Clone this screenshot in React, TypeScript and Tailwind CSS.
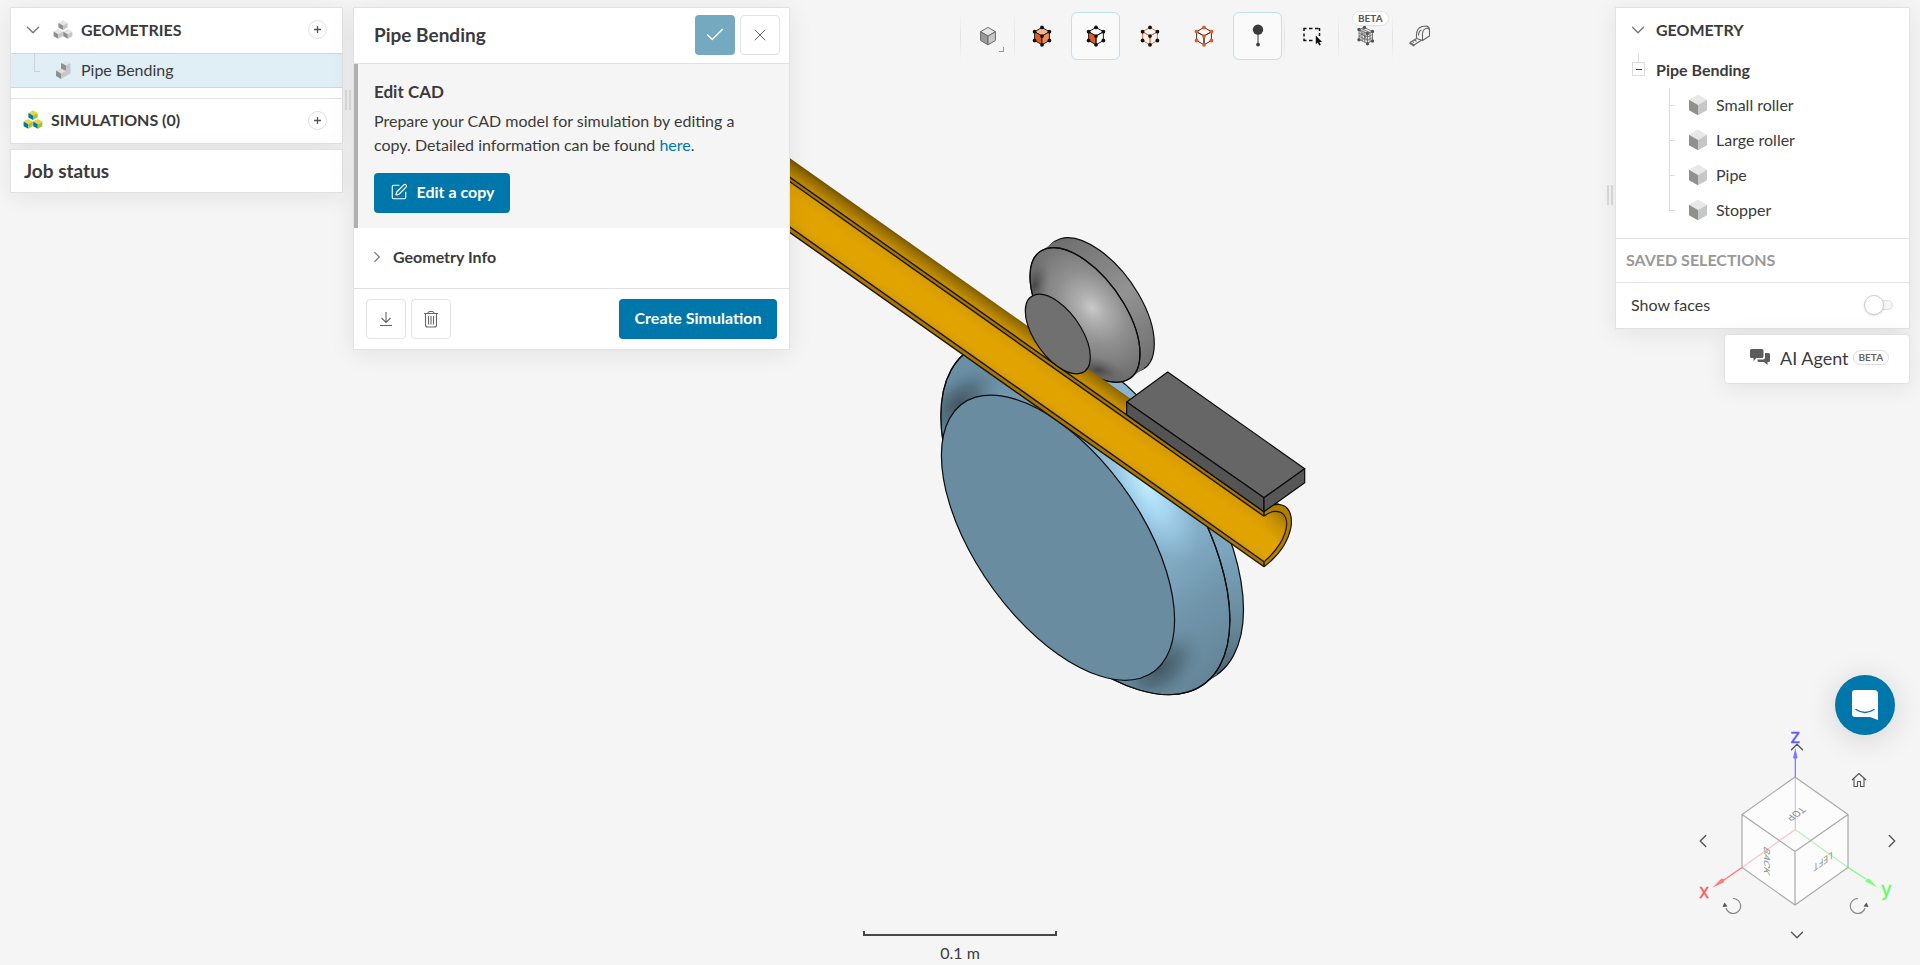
import type { ReactNode } from "react"
import { ChevronDown, ChevronLeft, ChevronRight, ChevronUp, Check, X, SquarePen } from "lucide-react"

const panel = "bg-white border border-[#e2e2e2] shadow-[0_4px_24px_rgba(0,0,0,0.08)]"
const iconButton = "w-10 h-10 shrink-0 flex items-center justify-center rounded border border-[#e3e3e3] bg-white text-[#666]"
const primaryButton = "h-10 shrink-0 flex items-center justify-center pb-[2px] rounded bg-[#0077aa] text-white font-bold"

const parts = ["Small roller", "Large roller", "Pipe", "Stopper"]

function Cube({ x, y, s, top, left, right }: { x: number; y: number; s: number; top: string; left: string; right: string }) {
  const h = s * 0.56
  return (
    <g transform={`translate(${x} ${y})`}>
      <polygon points={`0,${-2 * h} ${s},${-h} 0,0 ${-s},${-h}`} fill={top} />
      <polygon points={`${-s},${-h} 0,0 0,${s} ${-s},${s - h}`} fill={left} />
      <polygon points={`${s},${-h} 0,0 0,${s} ${s},${s - h}`} fill={right} />
    </g>
  )
}

function CubeStack({ top, left, right }: { top: string; left: string; right: string }) {
  return (
    <svg className="w-5 h-5 shrink-0" viewBox="0 0 20 20" aria-hidden="true">
      <Cube x={10} y={5.5} s={4.6} top={top} left={left} right={right} />
      <Cube x={5.2} y={14.2} s={4.6} top={top} left={left} right={right} />
      <Cube x={14.8} y={14.2} s={4.6} top={top} left={left} right={right} />
    </svg>
  )
}

function BodyIcon() {
  return (
    <svg className="w-5 h-[22px] shrink-0" viewBox="0 0 20 22" aria-hidden="true">
      <polygon points="10,0.5 19,5.8 10,11 1,5.8" fill="#e8e8e8" />
      <polygon points="1,5.8 10,11 10,21.3 1,16.2" fill="#90908d" />
      <polygon points="19,5.8 10,11 10,21.3 19,16.2" fill="#c6c7c9" />
    </svg>
  )
}

function AddButton({ label }: { label: string }) {
  return (
    <button aria-label={label} className="w-[19px] h-[19px] flex items-center justify-center rounded-full border border-[#dde1e6] bg-white">
      <svg className="w-[7px] h-[7px]" viewBox="0 0 7 7" stroke="#555" strokeWidth="1.3">
        <path d="M3.5 0v7M0 3.5h7" />
      </svg>
    </button>
  )
}

function Grip() {
  return (
    <div className="w-[10px] shrink-0 flex gap-[2px] pl-[2px]">
      <span className="w-[2px] h-5 bg-[#dadada]" />
      <span className="w-[2px] h-5 bg-[#dadada]" />
    </div>
  )
}

type HexProps = { edge: string; dot?: string; top?: string; left?: string; right?: string }

function HexIcon({ edge, dot, top = "none", left = "none", right = "none" }: HexProps) {
  const dots = [[12, 3.4], [19.4, 7.7], [19.4, 16.5], [12, 20.8], [4.6, 16.5], [4.6, 7.7], [12, 12.1]]
  return (
    <svg className="w-6 h-6" viewBox="0 0 24 24" stroke={edge} strokeWidth="1" strokeLinejoin="round">
      <polygon points="12,3.4 19.4,7.7 12,12.1 4.6,7.7" fill={top} />
      <polygon points="4.6,7.7 12,12.1 12,20.8 4.6,16.5" fill={left} />
      <polygon points="19.4,7.7 12,12.1 12,20.8 19.4,16.5" fill={right} />
      {dot && dots.map(([x, y]) => <circle key={`${x}-${y}`} cx={x} cy={y} r="1.9" fill={dot} stroke="none" />)}
    </svg>
  )
}

const tools: { label: string; icon: ReactNode; active?: boolean; divider?: boolean; beta?: boolean; more?: boolean }[] = [
  {
    label: "Render mode", divider: true, more: true,
    icon: <HexIcon edge="#6b6b6b" top="#e6e6e6" left="#9b9b9b" right="#c8c8c8" />,
  },
  { label: "Select volumes", divider: true, icon: <HexIcon edge="#222" dot="#111" top="#f7b193" left="#e35a1c" right="#f08a5b" /> },
  { label: "Select faces", active: true, icon: <HexIcon edge="#222" dot="#111" left="#e35a1c" /> },
  { label: "Select edges", icon: <HexIcon edge="#f0703a" dot="#111" /> },
  { label: "Select vertices", icon: <HexIcon edge="#333" dot="#e8591c" /> },
  {
    label: "Pick point", active: true,
    icon: (
      <svg className="w-6 h-6" viewBox="0 0 24 24">
        <path d="M12 6v15" stroke="#666" strokeWidth="1.3" />
        <circle cx="12" cy="5.6" r="5.2" fill="#3b3b3b" />
        <circle cx="12" cy="20.6" r="1.9" fill="#3b3b3b" />
      </svg>
    ),
  },
  {
    label: "Box select", divider: true,
    icon: (
      <svg className="w-6 h-6" viewBox="0 0 24 24">
        <path d="M4 7V4.500H6.500M9 4.500h3.500M15 4.500h3.500M4 9.500v3M4 14.500V16.500h2.500M9 16.500h3.500M19.500 4V7M19.500 9v3" fill="none" stroke="#111" strokeWidth="1.5" />
        <path d="M15.800 11.500v8.800l2-1.700 1.400 3 1.600-.8-1.400-2.900h2.700z" fill="#111" />
      </svg>
    ),
  },
  {
    label: "Mesh clip", divider: true, beta: true,
    icon: (
      <svg className="w-6 h-6" viewBox="0 0 24 24" fill="none" stroke="#666" strokeWidth="0.8">
        <path d="M5 5.500L10.500 3.500L18.500 7.500V16.500L13.500 19.500L5 15.500Z" fill="#e4e4e4" />
        <path d="M5 5.500L13.500 9.500L18.500 7.500M13.500 9.500V19.500M7.500 4.800L16 8.600M5 9L13.500 13M5 12.300L13.500 16.300M8 7V17M10.800 8.200V18.200M5 5.500L13.500 16.300M5 12.300L10.800 8.200M8 17L13.500 9.500M16 8.600V18M13.500 13L18.500 10.500M13.500 16.300L18.500 13.500" />
        <g fill="#555" stroke="none">
          <circle cx="5" cy="5.500" r="1.700" />
          <circle cx="10.500" cy="3.500" r="1.700" />
          <circle cx="18.500" cy="7.500" r="1.700" />
          <circle cx="18.500" cy="17" r="1.700" />
          <circle cx="13.500" cy="19.800" r="1.700" />
          <circle cx="5" cy="15.800" r="1.700" />
          <circle cx="13.500" cy="9.500" r="1.700" />
        </g>
      </svg>
    ),
  },
  {
    label: "Measure", divider: true,
    icon: (
      <svg className="w-6 h-6" viewBox="0 0 24 24" fill="none" stroke="#666" strokeWidth="1.100" strokeLinejoin="round">
        <path d="M8.500 14.500V11C8.500 6.500 11 3.500 14 2.500L18.500 2C20.500 2.500 21.500 4 21.500 6V12L14.500 16.500L8.500 14.500" />
        <path d="M14.500 16.500V9.500C14.500 7 16.500 4.500 18.500 4.200C20 4 21.500 5 21.500 6" />
        <path d="M10.500 11.500C10.500 8.500 12 6 13.500 6" />
        <path d="M8.500 14.500L2 18.500L6 21L13.500 16.300M2 18.500V19.500L6 22V21M4 17.300L6 18.500M6 16L8.500 17.300" />
      </svg>
    ),
  },
]

// Circle in the y/z plane of the view, seen as a tilted ellipse.
// Radii are a hair short so the renderer scales the two half arcs to meet exactly.
function discPath(cx: number, cy: number, r: number) {
  const arc = `A${r * 1.41} ${r * 0.7065} 54.7 0 1`
  return `M${cx - r} ${cy - 0.705 * r}${arc} ${cx + r} ${cy + 0.705 * r}${arc} ${cx - r} ${cy - 0.705 * r}Z`
}

function Disc({ cx, cy, r, fill }: { cx: number; cy: number; r: number; fill: string }) {
  return <path d={discPath(cx, cy, r)} fill={fill} stroke="#0c0c0c" strokeWidth="1.2" />
}

function Scene() {
  return (
    <svg className="absolute inset-0 w-full h-full" viewBox="0 0 1920 965" preserveAspectRatio="xMidYMid slice" role="img" aria-label="Pipe bending model">
      <defs>
        <linearGradient id="blueBody" gradientUnits="userSpaceOnUse" x1="960" y1="400" x2="1190" y2="690">
          <stop offset="0" stopColor="#6b90a6" />
          <stop offset="0.4" stopColor="#8ab6d0" />
          <stop offset="0.58" stopColor="#8fbcd8" />
          <stop offset="0.82" stopColor="#7197ad" />
          <stop offset="1" stopColor="#658698" />
        </linearGradient>
        <linearGradient id="blueRim" gradientUnits="userSpaceOnUse" x1="1150" y1="370" x2="1225" y2="680">
          <stop offset="0" stopColor="#8ab6d2" />
          <stop offset="0.6" stopColor="#7ca6c0" />
          <stop offset="0.85" stopColor="#668799" />
          <stop offset="1" stopColor="#4a6270" />
        </linearGradient>
        <radialGradient id="blueGlow" gradientUnits="userSpaceOnUse" cx="0" cy="0" r="1" gradientTransform="translate(1146 487) rotate(58) scale(84 34)">
          <stop offset="0" stopColor="#c0edff" />
          <stop offset="0.4" stopColor="#acdcf7" stopOpacity="0.8" />
          <stop offset="1" stopColor="#9bc8e4" stopOpacity="0" />
        </radialGradient>
        <radialGradient id="blueShadeA" gradientUnits="userSpaceOnUse" cx="0" cy="0" r="1" gradientTransform="translate(958 404) rotate(-42) scale(56 30)">
          <stop offset="0" stopColor="#435864" />
          <stop offset="0.4" stopColor="#4e6775" stopOpacity="0.75" />
          <stop offset="1" stopColor="#6b90a6" stopOpacity="0" />
        </radialGradient>
        <radialGradient id="blueShadeB" gradientUnits="userSpaceOnUse" cx="0" cy="0" r="1" gradientTransform="translate(1160 668) rotate(-38) scale(56 34)">
          <stop offset="0" stopColor="#435864" />
          <stop offset="0.4" stopColor="#4e6775" stopOpacity="0.75" />
          <stop offset="1" stopColor="#6b90a6" stopOpacity="0" />
        </radialGradient>
        <linearGradient id="greyRim" gradientUnits="userSpaceOnUse" x1="1055" y1="240" x2="1155" y2="375">
          <stop offset="0" stopColor="#6d6d6d" />
          <stop offset="0.5" stopColor="#939393" />
          <stop offset="1" stopColor="#6a6a6a" />
        </linearGradient>
        <radialGradient id="greyBody" gradientUnits="userSpaceOnUse" cx="0" cy="0" r="1" gradientTransform="translate(1092 308) rotate(50) scale(82 58)">
          <stop offset="0" stopColor="#cacaca" />
          <stop offset="0.18" stopColor="#b0b0b0" />
          <stop offset="0.5" stopColor="#8f8f8f" />
          <stop offset="1" stopColor="#6c6c6c" />
        </radialGradient>
        <radialGradient id="greyShade" cx="0.5" cy="0.5" r="0.5">
          <stop offset="0" stopColor="#3c3c3c" stopOpacity="0.8" />
          <stop offset="1" stopColor="#666" stopOpacity="0" />
        </radialGradient>
        <linearGradient id="pipeTop" gradientUnits="userSpaceOnUse" x1="790" y1="158" x2="781" y2="171">
          <stop offset="0" stopColor="#6e5000" />
          <stop offset="0.35" stopColor="#946c00" />
          <stop offset="1" stopColor="#c38d00" />
        </linearGradient>
        <linearGradient id="pipeInner" gradientUnits="userSpaceOnUse" x1="790" y1="182" x2="768" y2="213">
          <stop offset="0" stopColor="#d69b00" />
          <stop offset="0.3" stopColor="#e0a300" />
          <stop offset="0.75" stopColor="#e0a300" />
          <stop offset="1" stopColor="#d29900" />
        </linearGradient>
        <linearGradient id="pipeMouth" gradientUnits="userSpaceOnUse" x1="1284" y1="512" x2="1265" y2="532">
          <stop offset="0" stopColor="#9c7200" />
          <stop offset="0.5" stopColor="#c99200" />
          <stop offset="1" stopColor="#e0a300" />
        </linearGradient>
        <clipPath id="blueClip">
          <path d={discPath(1085.4, 518, 144.5)} />
        </clipPath>
        <clipPath id="greyClip">
          <path d={discPath(1085, 315, 55)} />
        </clipPath>
      </defs>

      {/* large roller */}
      <Disc cx={1099} cy={508} r={144.5} fill="url(#blueRim)" />
      <polygon points="1203.600,684.400 1217.300,674.600 980.900,341.800 967.200,351.600" fill="url(#blueRim)" />
      <Disc cx={1085.4} cy={518} r={144.5} fill="url(#blueBody)" />
      <g clipPath="url(#blueClip)">
        <rect x="900" y="320" width="360" height="400" fill="url(#blueShadeA)" />
        <rect x="900" y="320" width="360" height="400" fill="url(#blueShadeB)" />
        <rect x="900" y="320" width="360" height="400" fill="url(#blueGlow)" />
      </g>
      <Disc cx={1085.4} cy={518} r={144.5} fill="none" />
      <Disc cx={1058} cy={537.7} r={116.6} fill="#698ca0" />

      {/* small roller */}
      <Disc cx={1099.3} cy={305} r={55} fill="url(#greyRim)" />
      <polygon points="1130,378.200 1144.300,368.200 1054.300,241.800 1040,251.800" fill="url(#greyRim)" />
      <Disc cx={1085} cy={315} r={55} fill="url(#greyBody)" />
      <g clipPath="url(#greyClip)">
        <ellipse cx="1035" cy="285" rx="14" ry="28" fill="url(#greyShade)" transform="rotate(14 1035 285)" />
        <ellipse cx="1098" cy="370" rx="28" ry="13" fill="url(#greyShade)" transform="rotate(14 1098 370)" />
      </g>
      <Disc cx={1085} cy={315} r={55} fill="none" />

      {/* pipe */}
      <path d="M760 137L1281 505L1264 512L760 156.200Z" fill="url(#pipeTop)" />
      <path d="M1264 511.700C1270 505 1276 503.500 1281.700 505C1290 507 1292.500 517 1291 527C1288 543 1277 557 1264 566.700" fill="#b07f00" stroke="#1a1200" strokeWidth="1.200" />
      <path d="M1264 516.300C1270 511 1276 510.500 1281 512.500C1287 516 1288 524 1285 533C1281 545 1273 554 1264 561.700" fill="url(#pipeMouth)" stroke="#1a1200" strokeWidth="1.200" />
      <path d="M760 160.600L1264.500 516.300V561.700L760 206Z" fill="url(#pipeInner)" />
      <path d="M760 156.200L1264 511.700V516.300L760 160.600Z" fill="#a87800" />
      <path d="M760 206L1264 561.700V566.700L760 211.500Z" fill="#a87800" />
      <path d="M760 156.200L1264 511.700M760 160.600L1264 516.300M760 206L1264 561.700M760 211.500L1264 566.700M1264 511.700V516.300M1264 561.700V566.700" stroke="#1a1200" strokeWidth="1.400" fill="none" />
      <Disc cx={1057.8} cy={334} r={32.5} fill="#707070" />

      {/* stopper */}
      <g stroke="#0c0c0c" strokeWidth="1.200" strokeLinejoin="round">
        <polygon points="1167.700,372 1304.700,468.700 1264,497.700 1126.700,402" fill="#666" />
        <polygon points="1126.700,402 1264,497.700 1264,511.700 1126.700,414.700" fill="#545454" />
        <polygon points="1264,497.700 1304.700,468.700 1304.700,482.700 1264,511.700" fill="#575757" />
      </g>
    </svg>
  )
}

function ViewCube() {
  const nav = "absolute flex items-center justify-center w-5 h-5 text-[#555]"
  return (
    <div className="absolute right-0 bottom-[5px] w-[240px] h-[300px]">
      <svg className="w-full h-full" viewBox="0 0 240 300" role="img" aria-label="View cube">
        <polygon points="115,117 168,154.500 168,207.500 115,245 62,207.500 62,154.500" fill="#fcfcfc" />
        <g strokeWidth="1.200">
          <path d="M115.300 169.500V117" stroke="#c9c4f7" />
          <path d="M115.300 169.500L62 207.500" stroke="#fac4c4" />
          <path d="M115.300 169.500L168 207.500" stroke="#b4f5b4" />
          <path d="M115.300 117V96" stroke="#7474ff" />
          <path d="M62 207.500L44 220" stroke="#ff7474" />
          <path d="M168 207.500L186 219" stroke="#74ff74" />
        </g>
        <path d="M115.300 88L117.600 98L115.300 99L113 98Z" fill="#7a7aff" />
        <path d="M32.500 227.500L41.500 218.500L44.500 219.500L43.500 222.500Z" fill="#ff7a7a" />
        <path d="M197.500 227.500L185.500 221.500L186.500 219L189 218.500Z" fill="#7aff7a" />
        <path d="M115 117L168 154.500V207.500L115 245L62 207.500V154.500ZM62 154.500L115 191.500L168 154.500M115 191.500V245" fill="none" stroke="#a9a9a9" strokeWidth="1.200" />
        <g fill="#8a8a8a" fontFamily="Inter, 'Liberation Sans', sans-serif" fontSize="10" textAnchor="middle">
          <text transform="matrix(-0.780 0.550 -0.780 -0.550 113.500 152)">TOP</text>
          <text transform="matrix(0 1 -0.800 -0.560 84 199)">BACK</text>
          <text transform="matrix(-0.800 0.560 0 -1 143 198)">LEFT</text>
        </g>
        <g fontFamily="Inter, 'Liberation Sans', sans-serif" fontSize="19" strokeWidth="0.300">
          <text x="110" y="83" fill="#5c5cff" stroke="#5c5cff">z</text>
          <text x="19" y="238" fill="#ff5c5c" stroke="#ff5c5c">x</text>
          <text x="201" y="236" fill="#5cff5c" stroke="#5cff5c">y</text>
        </g>
      </svg>
      <button aria-label="Rotate up" className={`${nav} left-[107px] top-[77px]`}><ChevronUp size={22} strokeWidth={1.5} className="shrink-0" /></button>
      <button aria-label="Rotate left" className={`${nav} left-[13px] top-[171px]`}><ChevronLeft size={22} strokeWidth={1.5} className="shrink-0" /></button>
      <button aria-label="Rotate right" className={`${nav} left-[202px] top-[171px]`}><ChevronRight size={22} strokeWidth={1.5} className="shrink-0" /></button>
      <button aria-label="Rotate down" className={`${nav} left-[107px] top-[265px]`}><ChevronDown size={22} strokeWidth={1.5} className="shrink-0" /></button>
      <button aria-label="Home view" className={`${nav} left-[169px] top-[110px]`}>
        <svg className="w-4 h-4" viewBox="0 0 16 16" fill="none" stroke="currentColor" strokeWidth="1.100" strokeLinejoin="round">
          <path d="M1 8L8 1.500L15 8M3 6.500V14.500H6.500V9.500H9.500V14.500H13V6.500" />
        </svg>
      </button>
      <button aria-label="Roll left" className={`${nav} left-[42px] top-[236px]`}>
        <svg className="w-5 h-5" viewBox="0 0 20 20">
          <path d="M11 2.500A7.500 7.500 0 1 1 4 12" fill="none" stroke="#888" strokeWidth="1.200" />
          <path d="M0.500 11L2.500 6.500L5.500 10.500Z" fill="#555" />
        </svg>
      </button>
      <button aria-label="Roll right" className={`${nav} left-[169px] top-[236px]`}>
        <svg className="w-5 h-5" viewBox="0 0 20 20">
          <path d="M9 2.500A7.500 7.500 0 1 0 16 12" fill="none" stroke="#888" strokeWidth="1.200" />
          <path d="M19.500 11L17.500 6.500L14.500 10.500Z" fill="#555" />
        </svg>
      </button>
      <button aria-label="Open chat" className="absolute left-[155px] top-[15px] w-[60px] h-[60px] rounded-full bg-[#0077aa] flex items-center justify-center shadow-[0_4px_32px_rgba(0,0,0,0.14)]">
        <svg className="w-[30px] h-[30px]" viewBox="0 0 30 30">
          <path d="M5 0H24Q28 0 28 4V30L20 27H5Q2 27 2 24V3Q2 0 5 0Z" fill="#fff" />
          <path d="M6 19.500Q15 25.500 24 19.500" fill="none" stroke="#0077aa" strokeWidth="1.500" strokeLinecap="round" />
        </svg>
      </button>
    </div>
  )
}

export default function App() {
  return (
    <div className="relative min-h-screen overflow-hidden bg-[#f5f5f5] font-['Lato',sans-serif] text-base text-[#3b3b3b]">
      <Scene />

      <div className="relative flex items-start pt-[7px] px-[10px]">
        <div className="w-[333px] shrink-0">
          <nav className={panel} aria-label="Project tree">
            <div className="flex items-center h-[45px] pb-[2px] pl-[11px] pr-[15px]">
              <button aria-label="Collapse geometries" className="text-[#777]"><ChevronDown size={22} strokeWidth={1.5} /></button>
              <span className="ml-[9px] mr-2"><CubeStack top="#e6e6e6" left="#8f8f8c" right="#c6c7c9" /></span>
              <h2 className="flex-1 font-bold">GEOMETRIES</h2>
              <AddButton label="Add geometry" />
            </div>
            <a href="#pipe-bending" className="flex items-center h-[35px] pb-[2px] bg-[#e0eef5] border-y border-[#bfdde8]">
              <span className="self-start ml-[23px] w-[6px] h-[18px] border-l border-b border-[#c9d3d8]" />
              <svg className="ml-[15px] mr-[10px] w-4 h-[18px]" viewBox="0 0 16 18" aria-hidden="true">
                <path d="M6 2L10.500 0L15.500 2L11 4.500Z" fill="#e4e4e4" />
                <path d="M6 2L11 4.500V10L6 8Z" fill="#8f8f8c" />
                <path d="M1 9.500L6 7.500L11 10L6 12.500Z" fill="#dedede" />
                <path d="M1 9.500L6 12.500V18L1 15Z" fill="#8f8f8c" />
                <path d="M11 4.500L15.500 2V12.500L6 18V12.500L11 10Z" fill="#c6c7c9" />
              </svg>
              Pipe Bending
            </a>
            <div className="h-[11px] border-b border-[#e2e2e2]" />
            <div className="flex items-center h-[44px] pb-[2px] pl-3 pr-[15px]">
              <CubeStack top="#e3da3c" left="#0077aa" right="#a6c23a" />
              <h2 className="flex-1 ml-2 font-bold">SIMULATIONS (0)</h2>
              <AddButton label="Add simulation" />
            </div>
          </nav>
          <section className={`${panel} mt-[5px] h-[44px] flex items-center px-[13px]`}>
            <h2 className="text-[19px] leading-6 font-bold">Job status</h2>
          </section>
        </div>

        <div className="pt-[83px]"><Grip /></div>

        <section className={`${panel} w-[437px] shrink-0`}>
          <header className="flex items-center gap-[5px] h-14 pb-px pl-5 pr-[9px] border-b border-[#e2e2e2]">
            <h1 className="flex-1 text-[19px] leading-6 font-bold">Pipe Bending</h1>
            <button aria-label="Confirm" className="w-10 h-10 rounded bg-[#74a9c0] text-white flex items-center justify-center"><Check size={22} strokeWidth={1.5} /></button>
            <button aria-label="Close" className={iconButton}><X size={20} strokeWidth={1.2} /></button>
          </header>
          <div className="bg-[#f5f5f5] border-l-4 border-[#b0b0b0] pl-4 pr-8 pt-4 pb-[15px]">
            <h2 className="text-[17px] leading-6 font-bold">Edit CAD</h2>
            <p className="mt-[5px] leading-6">
              Prepare your CAD model for simulation by editing a copy. Detailed information can be found <a href="#docs" className="text-[#0077aa]">here</a>.
            </p>
            <button className={`${primaryButton} mt-4 w-[136px] gap-[9px]`}>
              <SquarePen size={18} strokeWidth={1.5} />
              Edit a copy
            </button>
          </div>
          <button className="flex items-center gap-[7px] w-full h-[60px] pb-[2px] pl-[14px] font-bold">
            <ChevronRight size={18} strokeWidth={1.5} className="text-[#777]" />
            Geometry Info
          </button>
          <footer className="flex items-center gap-[5px] h-[61px] pl-3 pr-3 border-t border-[#e2e2e2]">
            <button aria-label="Download" className={iconButton}>
              <svg className="w-4 h-4" viewBox="0 0 16 16" fill="none" stroke="currentColor" strokeWidth="1.100">
                <path d="M8 1V11.500M3.500 7L8 11.500L12.500 7M2 14.500H14" />
              </svg>
            </button>
            <button aria-label="Delete" className={iconButton}>
              <svg className="w-4 h-[18px]" viewBox="0 0 16 18" fill="none" stroke="currentColor" strokeWidth="1.100">
                <path d="M1 3.500H15M5 3.500Q5 1.500 7 1.500H9Q11 1.500 11 3.500M2.500 3.500V15Q2.500 17 4.500 17H11.500Q13.500 17 13.500 15V3.500M5.500 6V14.500M8 6V14.500M10.500 6V14.500" />
              </svg>
            </button>
            <button className={`${primaryButton} ml-auto w-[158px]`}>Create Simulation</button>
          </footer>
        </section>

        <div role="toolbar" aria-label="Viewer tools" className="flex-1 flex justify-center gap-[5px] pt-[5px] pl-3">
          {tools.map((tool) => (
            <button
              key={tool.label}
              aria-label={tool.label}
              className={`relative w-[49px] h-12 shrink-0 flex items-center justify-center rounded-md border ${tool.active ? "bg-[#fafafa] border-[#bfe0f0]" : "border-transparent"}`}
            >
              {tool.divider && <span className="absolute -left-[4px] top-0 w-px h-12 bg-linear-to-b from-transparent via-[#e2e2e2] to-transparent" />}
              {tool.icon}
              {tool.more && <span className="absolute right-[7px] bottom-[7px] w-[5px] h-[5px] border-r border-b border-[#999]" />}
              {tool.beta && (
                <span className="absolute left-[10px] -top-[2px] h-[15px] px-[5px] rounded-full bg-white border border-[#e2e2e2] text-[10px] leading-[13px] font-bold text-[#555]">BETA</span>
              )}
            </button>
          ))}
        </div>

        <div className="pt-[178px]"><Grip /></div>

        <aside className="w-[295px] shrink-0 flex flex-col items-end">
          <div className={`${panel} w-full`}>
            <div className="flex items-center h-[45px] pb-[2px] pl-[11px]">
              <button aria-label="Collapse geometry" className="text-[#777]"><ChevronDown size={22} strokeWidth={1.5} /></button>
              <h2 className="ml-[7px] font-bold">GEOMETRY</h2>
            </div>
            <div className="flex items-center h-[35px] pb-[2px] pl-4">
              <span className="flex flex-col items-center self-start">
                <span className="w-px h-[9px] bg-[#dcdcdc]" />
                <button aria-label="Collapse Pipe Bending" className="w-[13px] h-[14px] flex items-center justify-center border border-[#dcdcdc]">
                  <span className="w-[6px] h-px bg-[#444]" />
                </button>
              </span>
              <span className="ml-[11px] font-bold">Pipe Bending</span>
            </div>
            <ul className="pb-[10px]">
              {parts.map((part, i) => (
                <li key={part} className="flex items-center h-[35px] pb-[2px] pl-[53px]">
                  <span className={`relative self-start w-[6px] ${i === parts.length - 1 ? "h-[18px]" : "h-[35px]"} border-l border-[#dcdcdc]`}>
                    <span className="absolute left-0 top-[17px] w-[5px] h-px bg-[#dcdcdc]" />
                  </span>
                  <span className="ml-[13px] mr-2"><BodyIcon /></span>
                  {part}
                </li>
              ))}
            </ul>
            <h2 className="flex items-center h-[45px] pb-[2px] pl-[10px] border-y border-[#e2e2e2] font-bold text-[#999]">SAVED SELECTIONS</h2>
            <div className="flex items-center justify-between h-[45px] pb-[2px] pl-[15px] pr-4">
              <label htmlFor="show-faces">Show faces</label>
              <input
                id="show-faces"
                type="checkbox"
                role="switch"
                className="relative appearance-none w-[25px] h-[10px] rounded-full bg-[#f5f5f5] border border-[#e0e0e0] before:absolute before:-left-[5px] before:-top-[6px] before:w-5 before:h-5 before:rounded-full before:bg-white before:border before:border-[#ccc] before:shadow-sm"
              />
            </div>
          </div>
          <button className={`${panel} mt-[5px] w-[186px] h-[50px] rounded flex items-center pb-[3px] pl-[25px] text-lg`}>
            <svg className="w-5 h-[17px] mr-[10px]" viewBox="0 0 20 17" fill="#5c5c5c" aria-hidden="true">
              <path d="M1.500 0H12Q13.500 0 13.500 1.500V7.500Q13.500 9 12 9H6.500L3.500 12V9H1.500Q0 9 0 7.500V1.500Q0 0 1.500 0Z" />
              <path d="M15 4H18.500Q20 4 20 5.500V11.500Q20 13 18.500 13H17.500V16L14 13H9Q7.500 13 7.500 11.500V10.500H13Q15 10.500 15 8.500Z" />
            </svg>
            AI Agent
            <span className="ml-1 h-[15px] px-[5px] rounded-full border border-[#dcdcdc] text-[10px] leading-[13px] font-bold text-[#666]">BETA</span>
          </button>
        </aside>
      </div>

      <div className="absolute bottom-0 left-1/2 -translate-x-1/2 w-[194px] text-center">
        <div className="h-[5px] border-x-2 border-b-2 border-[#484848]" />
        <p className="mt-[5px] leading-6">0.1 m</p>
      </div>
      <ViewCube />
    </div>
  )
}
